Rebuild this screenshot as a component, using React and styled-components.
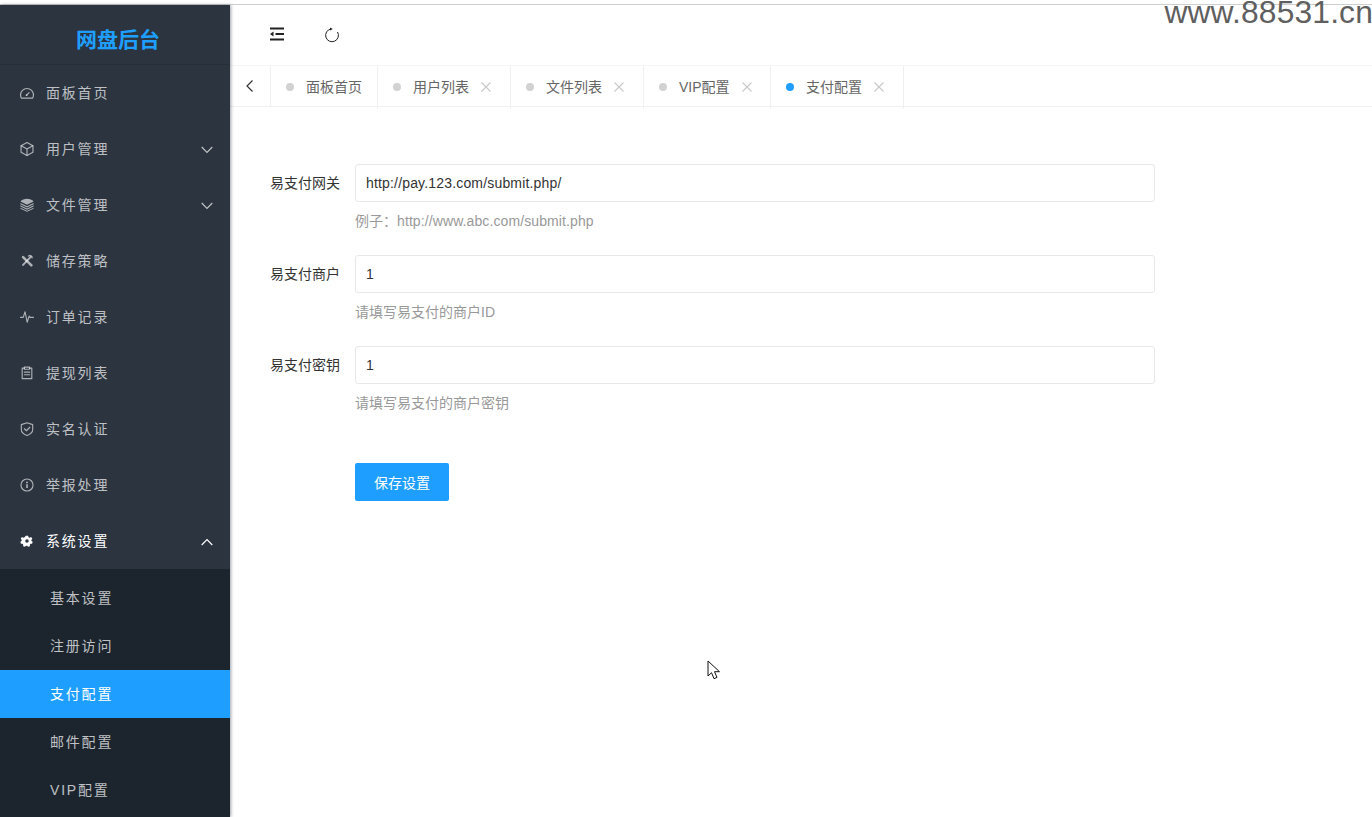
import React from "react";
import styled, { createGlobalStyle } from "styled-components";

const Global = createGlobalStyle`
  html, body { margin: 0; padding: 0; height: 100%; background: #fff; overflow: hidden; }
  #root { height: 100%; }
  * { box-sizing: border-box; }
  body { font-family: "Liberation Sans", "Noto Sans CJK SC", sans-serif; font-size: 14px; color: #333; }
`;

const Page = styled.div`
  position: relative;
  height: 817px;
  display: flex;
  flex-direction: column;
  overflow: hidden;
`;
const TopStrip = styled.div`
  height: 5px;
  flex: none;
  border-bottom: 1px solid #cfcfcf;
`;
const Watermark = styled.div`
  position: absolute;
  top: 0;
  right: -1px;
  font-size: 31.8px;
  letter-spacing: 0.15px;
  line-height: 24px;
  color: #5f5f5f;
  white-space: nowrap;
`;
const Body = styled.div`
  flex: 1;
  display: flex;
  min-height: 0;
`;
const Sidebar = styled.aside`
  width: 230px;
  flex: none;
  display: flex;
  flex-direction: column;
  background: #2b343f;
  box-shadow: 1px 0 3px rgba(40, 50, 70, 0.45);
  position: relative;
  z-index: 2;
  overflow: hidden;
`;
const Logo = styled.div`
  height: 60px;
  flex: none;
  display: flex;
  align-items: center;
  justify-content: center;
  padding: 7px 0 0 6px;
  border-bottom: 1px solid #262e38;
  color: #1e9fff;
  font-size: 21px;
  font-weight: 700;
`;
const MenuItem = styled.div`
  height: 56px;
  flex: none;
  display: flex;
  align-items: center;
  padding: 0 17px 2px 20px;
  color: ${(p) => (p.$open ? "#fff" : "rgba(255,255,255,0.7)")};
  letter-spacing: 1.8px;
`;
const MenuIcon = styled.span`
  width: 14px;
  height: 14px;
  margin: 2px 12px 0 0;
  flex: none;
  display: flex;
  color: ${(p) => (p.$open ? "#fff" : "rgba(255,255,255,0.62)")};
`;
const MenuText = styled.span`
  flex: 1;
`;
const ChevronSvg = styled.svg`
  margin-top: 4px;
`;
const SubMenu = styled.div`
  flex: 1;
  background: #1c252e;
  padding-top: 5px;
`;
const SubItem = styled.div`
  height: 48px;
  display: flex;
  align-items: center;
  padding: 0 0 2px 50px;
  letter-spacing: 1.8px;
  color: ${(p) => (p.$active ? "#fff" : "rgba(255,255,255,0.72)")};
  background: ${(p) => (p.$active ? "#1e9fff" : "transparent")};
`;
const Main = styled.main`
  flex: 1;
  min-width: 0;
  display: flex;
  flex-direction: column;
`;
const Header = styled.header`
  height: 61px;
  flex: none;
  display: flex;
  align-items: center;
  padding: 0 0 2px 39px;
  gap: 39px;
  border-bottom: 1px solid #f6f6f6;
`;
const HeaderIcon = styled.span`
  width: 16px;
  height: 16px;
  display: flex;
  color: #222;
  margin-top: ${(p) => p.$drop || 0}px;
`;
const TabBar = styled.div`
  height: 41px;
  flex: none;
  display: flex;
  border-bottom: 1px solid #f0f0f0;
`;
const TabArrow = styled.div`
  width: 41px;
  display: flex;
  align-items: center;
  justify-content: center;
  border-right: 1px solid #f0f0f0;
  color: #333;
`;
const Tab = styled.div`
  width: ${(p) => p.$width}px;
  height: 43px;
  padding: 0 0 4px 15px;
  display: flex;
  align-items: center;
  border-right: 1px solid #f0f0f0;
  color: #666;
  white-space: nowrap;
`;
const Dot = styled.i`
  width: 8px;
  height: 8px;
  border-radius: 50%;
  margin: 2px 12px 0 0;
  background: ${(p) => (p.$active ? "#1e9fff" : "#d2d2d2")};
`;
const Close = styled.span`
  width: 12px;
  height: 12px;
  margin: 2px 0 0 11px;
  display: flex;
  color: #c8c8c8;
`;
const Form = styled.form`
  padding: 57px 0 0 40px;
  display: flex;
  flex-direction: column;
`;
const Row = styled.div`
  display: grid;
  grid-template-columns: 70px 800px;
  column-gap: 15px;
  align-items: center;
  height: 91px;
  align-content: start;
`;
const Label = styled.label`
  color: #333;
  line-height: 38px;
  white-space: nowrap;
`;
const Input = styled.input`
  height: 38px;
  width: 100%;
  border: 1px solid #e8e8e8;
  border-radius: 3px;
  padding: 0 10px;
  font: inherit;
  letter-spacing: 0.17px;
  color: #333;
  outline: none;
`;
const Help = styled.div`
  grid-column: 2;
  color: #999;
  line-height: 20px;
  margin-top: 9px;
`;
const HelpUrl = styled.span`
  letter-spacing: 0.1px;
`;
const Actions = styled.div`
  padding: 26px 0 0 85px;
`;
const Button = styled.button`
  width: 94px;
  height: 38px;
  border: 0;
  border-radius: 2px;
  background: #1e9fff;
  color: #fff;
  font: inherit;
  padding: 0;
`;
const Cursor = styled.svg`
  position: absolute;
  left: 707px;
  top: 660px;
  width: 14px;
  height: 21px;
`;

const line = { fill: "none", stroke: "currentColor", strokeWidth: 1.3, strokeLinecap: "round", strokeLinejoin: "round" };
const Ico = ({ children, size = 14 }) => (
  <svg width={size} height={size} viewBox="0 0 16 16">{children}</svg>
);

const icons = {
  gauge: (
    <Ico><g {...line}><path d="M1.700 13.800C.9 12.600.6 11.500.6 10.200a7.400 7.400 0 0 1 14.800 0c0 1.300-.3 2.400-1.100 3.600z" /><path d="M7.600 10.500 10.400 7.500" /></g><circle cx="7.500" cy="10.500" r="1" fill="currentColor" /></Ico>
  ),
  box: (
    <Ico><g {...line}><path d="M8 .6 14.800 4.300v7.400L8 15.400l-6.800-3.700V4.300z" /><path d="M1.400 4.400 8 8l6.600-3.600M8 8v7.200" /></g></Ico>
  ),
  layers: (
    <Ico>
      <path fill="currentColor" d="M8 .8C11 .8 14 2 15.500 4L8 7.800.5 4C2 2 5 .8 8 .8z" />
      <g fill="currentColor">
        <path d="M.5 5.600 8 9.300l7.500-3.700v1.500L8 10.800.5 7.100z" />
        <path d="M.5 8.300 8 12l7.500-3.700v1.500L8 13.500.5 9.800z" />
        <path d="M.5 11 8 14.700l7.500-3.700v1.400L8 15.800.5 12.400z" />
      </g>
    </Ico>
  ),
  tools: (
    <Ico><g fill="none" stroke="currentColor" strokeLinecap="round"><path d="m3.500 3.500 9.500 9.500" strokeWidth="3" /><path d="M12 3.500 3.500 12.500" strokeWidth="2.200" /><path d="M9.800 2.300c1.800-1.200 4.200 0 4 2" strokeWidth="1.600" /></g></Ico>
  ),
  pulse: (
    <Ico><path {...line} d="M.5 8.500h3.200L5.800 2l2.400 12L10.400 7l1.100 1.500h4" /></Ico>
  ),
  clip: (
    <Ico><g {...line}><path d="M5 2.500H2.500v12h11v-12H11" /><rect x="5" y="1.300" width="6" height="2.400" /><path d="M5 7h6M5 10h6" /></g></Ico>
  ),
  shield: (
    <Ico><g {...line}><path d="M8 .8 14.500 3v5.500c0 3-2.800 5.500-6.500 6.900-3.700-1.400-6.500-3.900-6.500-6.900V3z" /><path d="m5 7.700 2.300 2.300L11.200 6" /></g></Ico>
  ),
  info: (
    <Ico><circle {...line} cx="8" cy="8" r="6.900" /><path d="M8 7.200V11.500" stroke="currentColor" strokeWidth="1.900" /><circle cx="8" cy="5" r="1.100" fill="currentColor" /></Ico>
  ),
  gear: (
    <Ico><path fill="currentColor" fillRule="evenodd" d="M6.500 1h3l.5 2 1.700.8 1.800-1 1.600 2.200-1.300 1.600.2 1.400 1.600 1-.8 2.600-2 .1-1.100 1.300.3 2-2.600.8-1.200-1.600H6.600L5.400 15.800l-2.600-.8.3-2-1.100-1.300-2-.1L-.8 9l1.600-1L1 6.600-.3 5 1.300 2.800l1.800 1L4.800 3z M8 5.800a2.300 2.300 0 1 0 0 4.600 2.300 2.300 0 0 0 0-4.600z" transform="translate(1.100 1.100) scale(.86)" /></Ico>
  ),
};

const Chevron = ({ up }) => (
  <ChevronSvg width="12" height="8" viewBox="0 0 12 8">
    <path d={up ? "M.7 7 6 1.500 11.300 7" : "M.7 1 6 6.500 11.300 1"} fill="none" stroke="currentColor" strokeWidth="1.200" />
  </ChevronSvg>
);

const menu = [
  ["gauge", "面板首页"],
  ["box", "用户管理", "down"],
  ["layers", "文件管理", "down"],
  ["tools", "储存策略"],
  ["pulse", "订单记录"],
  ["clip", "提现列表"],
  ["shield", "实名认证"],
  ["info", "举报处理"],
];
const subs = ["基本设置", "注册访问", "支付配置", "邮件配置", "VIP配置"];
const tabs = [["面板首页", 107], ["用户列表", 133], ["文件列表", 133], ["VIP配置", 127], ["支付配置", 133]];
const fields = [
  ["易支付网关", "http://pay.123.com/submit.php/", "例子：", "http://www.abc.com/submit.php"],
  ["易支付商户", "1", "请填写易支付的商户ID"],
  ["易支付密钥", "1", "请填写易支付的商户密钥"],
];

export default function App() {
  return (
    <>
      <Global />
      <Page>
        <TopStrip />
        <Body>
          <Sidebar>
            <Logo>网盘后台</Logo>
            {menu.map(([icon, text, arrow]) => (
              <MenuItem key={text}>
                <MenuIcon>{icons[icon]}</MenuIcon>
                <MenuText>{text}</MenuText>
                {arrow && <Chevron />}
              </MenuItem>
            ))}
            <MenuItem $open>
              <MenuIcon $open>{icons.gear}</MenuIcon>
              <MenuText>系统设置</MenuText>
              <Chevron up />
            </MenuItem>
            <SubMenu>
              {subs.map((s) => (
                <SubItem key={s} $active={s === "支付配置"}>{s}</SubItem>
              ))}
            </SubMenu>
          </Sidebar>
          <Main>
            <Header>
              <HeaderIcon>
                <Ico size={16}>
                  <path d="M1 2.500h14M6.500 8H15M1 13.500h14" stroke="currentColor" strokeWidth="1.800" fill="none" />
                  <path d="M1 8l3.500-2.500v5z" fill="currentColor" />
                </Ico>
              </HeaderIcon>
              <HeaderIcon $drop={2}>
                <Ico size={16}>
                  <path d="M13.500 5A6.400 6.400 0 1 1 7 2" fill="none" stroke="currentColor" strokeWidth="1" />
                  <path d="M6 .4 8.800 2 6 3.600z" fill="currentColor" />
                </Ico>
              </HeaderIcon>
            </Header>
            <TabBar>
              <TabArrow>
                <svg width="10" height="14" viewBox="0 0 10 14">
                  <path d="M7.500 1.500 2 7l5.500 5.500" fill="none" stroke="currentColor" strokeWidth="1.200" />
                </svg>
              </TabArrow>
              {tabs.map(([t, width], i) => (
                <Tab key={t} $width={width}>
                  <Dot $active={i === 4} />
                  {t}
                  {i > 0 && (
                    <Close>
                      <svg width="12" height="12" viewBox="0 0 12 12">
                        <path d="M1.500 1.500l9 9M10.500 1.500l-9 9" stroke="currentColor" strokeWidth="1.100" fill="none" />
                      </svg>
                    </Close>
                  )}
                </Tab>
              ))}
            </TabBar>
            <Form>
              {fields.map(([label, value, help, url]) => (
                <Row key={label}>
                  <Label>{label}</Label>
                  <Input defaultValue={value} />
                  <Help>{help}{url && <HelpUrl>{url}</HelpUrl>}</Help>
                </Row>
              ))}
              <Actions>
                <Button type="button">保存设置</Button>
              </Actions>
            </Form>
          </Main>
        </Body>
        <Watermark>www.88531.cn</Watermark>
        <Cursor viewBox="0 0 14 21">
          <path d="M1 1v15l3.500-3.300 2.500 6 3-1.300-2.500-5.700H12.500z" fill="#fff" stroke="#111" strokeWidth="1" />
        </Cursor>
      </Page>
    </>
  );
}
